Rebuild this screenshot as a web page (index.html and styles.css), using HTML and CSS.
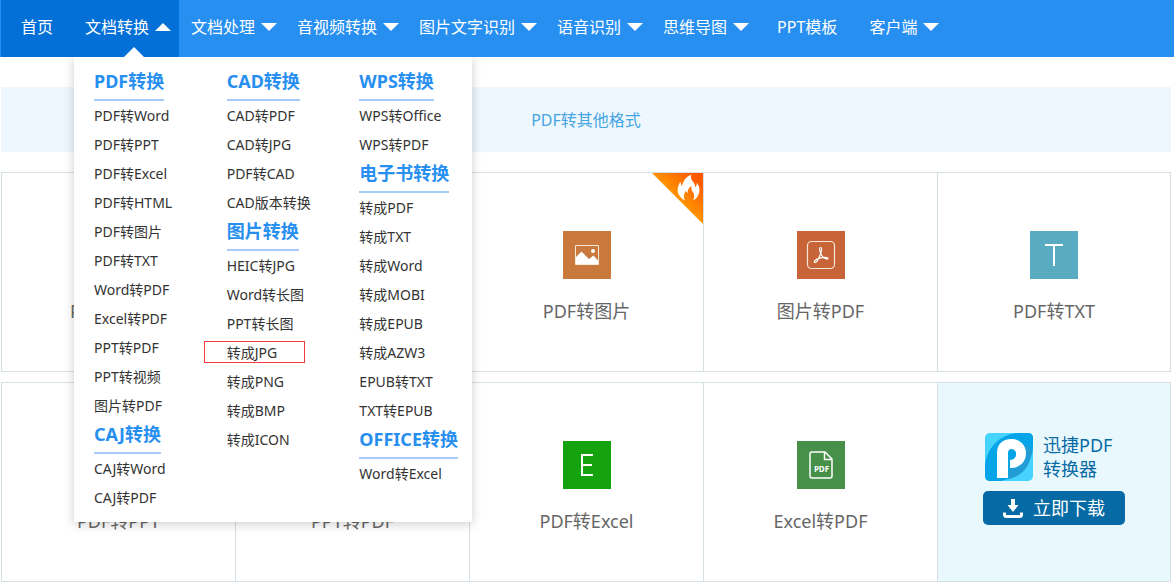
FILE: index.html
```html
<!DOCTYPE html>
<html lang="zh-CN">
<head>
<meta charset="utf-8">
<meta name="viewport" content="width=device-width, initial-scale=1">
<title>PDF转换器</title>
<link rel="stylesheet" href="styles.css">
</head>
<body>
<header class="topbar">
  <nav>
    <ul class="nav">
      <li class="nav-item plain active"><a href="#">首页</a></li>
      <li class="nav-item active open">
        <a href="#">文档转换<span class="caret up"></span></a>
        <div class="mega">
          <section class="mega-col">
            <h3><a href="#">PDF转换</a></h3>
            <ul>
              <li><a href="#">PDF转Word</a></li>
              <li><a href="#">PDF转PPT</a></li>
              <li><a href="#">PDF转Excel</a></li>
              <li><a href="#">PDF转HTML</a></li>
              <li><a href="#">PDF转图片</a></li>
              <li><a href="#">PDF转TXT</a></li>
              <li><a href="#">Word转PDF</a></li>
              <li><a href="#">Excel转PDF</a></li>
              <li><a href="#">PPT转PDF</a></li>
              <li><a href="#">PPT转视频</a></li>
              <li><a href="#">图片转PDF</a></li>
            </ul>
            <h3><a href="#">CAJ转换</a></h3>
            <ul>
              <li><a href="#">CAJ转Word</a></li>
              <li><a href="#">CAJ转PDF</a></li>
            </ul>
          </section>
          <section class="mega-col">
            <h3><a href="#">CAD转换</a></h3>
            <ul>
              <li><a href="#">CAD转PDF</a></li>
              <li><a href="#">CAD转JPG</a></li>
              <li><a href="#">PDF转CAD</a></li>
              <li><a href="#">CAD版本转换</a></li>
            </ul>
            <h3><a href="#">图片转换</a></h3>
            <ul>
              <li><a href="#">HEIC转JPG</a></li>
              <li><a href="#">Word转长图</a></li>
              <li><a href="#">PPT转长图</a></li>
              <li class="marked"><a href="#">转成JPG</a></li>
              <li><a href="#">转成PNG</a></li>
              <li><a href="#">转成BMP</a></li>
              <li><a href="#">转成ICON</a></li>
            </ul>
          </section>
          <section class="mega-col">
            <h3><a href="#">WPS转换</a></h3>
            <ul>
              <li><a href="#">WPS转Office</a></li>
              <li><a href="#">WPS转PDF</a></li>
            </ul>
            <h3><a href="#">电子书转换</a></h3>
            <ul>
              <li><a href="#">转成PDF</a></li>
              <li><a href="#">转成TXT</a></li>
              <li><a href="#">转成Word</a></li>
              <li><a href="#">转成MOBI</a></li>
              <li><a href="#">转成EPUB</a></li>
              <li><a href="#">转成AZW3</a></li>
              <li><a href="#">EPUB转TXT</a></li>
              <li><a href="#">TXT转EPUB</a></li>
            </ul>
            <h3><a href="#">OFFICE转换</a></h3>
            <ul>
              <li><a href="#">Word转Excel</a></li>
            </ul>
          </section>
        </div>
      </li>
      <li class="nav-item"><a href="#">文档处理<span class="caret"></span></a></li>
      <li class="nav-item"><a href="#">音视频转换<span class="caret"></span></a></li>
      <li class="nav-item"><a href="#">图片文字识别<span class="caret"></span></a></li>
      <li class="nav-item"><a href="#">语音识别<span class="caret"></span></a></li>
      <li class="nav-item"><a href="#">思维导图<span class="caret"></span></a></li>
      <li class="nav-item plain"><a href="#">PPT模板</a></li>
      <li class="nav-item"><a href="#">客户端<span class="caret"></span></a></li>
    </ul>
  </nav>
</header>

<main class="content">
  <div class="banner"><a href="#">PDF转其他格式</a></div>

  <div class="cards">
    <a class="card" href="#">
      <span class="icon blue"></span>
      <span class="card-title">PDF转Word</span>
    </a>
    <a class="card" href="#">
      <span class="icon blue"></span>
    </a>
    <a class="card" href="#">
      <svg class="hot" viewBox="0 0 50 50" aria-hidden="true">
        <defs>
          <linearGradient id="hotFill" gradientUnits="userSpaceOnUse" x1="22" y1="28" x2="44" y2="6">
            <stop offset="0" stop-color="#ff9c00"/>
            <stop offset="1" stop-color="#ff5a00"/>
          </linearGradient>
        </defs>
        <path d="M0 0H50V50Z" fill="url(#hotFill)"/>
        <path d="M32 27C27 24 24 19 25.500 14C26 11.500 27 10.500 27.500 8.500C28.500 10 28.800 11.500 29 13C31 10 30.500 5 38.500 1.500C37.500 5 39 7 41 9.500C42 11 42.500 12.500 42.500 14C43.500 13 44 11.500 43.800 9.500C46 12 47 14.500 46.500 18C46 22 44 25 40.500 27C42 23 41.500 20 39.500 18C38.500 16.500 38.500 15 38.800 13C35.500 14.500 35 17 35 19.500C34 19 33.500 18.500 33.300 17.500C31 20.500 31 24 32 27Z" fill="#fff"/>
      </svg>
      <svg class="icon brown" viewBox="0 0 48 48" aria-hidden="true">
        <path d="M12.500 14.500H35.500V33.500H12.500Z" fill="none" stroke="#f7e8dc"/>
        <path d="M13 26L18.500 20.500L26 28L30.500 24.500L35 29.500V33H13Z" fill="#fff"/>
        <circle cx="30" cy="20" r="2" fill="#fff"/>
      </svg>
      <span class="card-title">PDF转图片</span>
    </a>
    <a class="card" href="#">
      <svg class="icon rust" viewBox="0 0 48 48" aria-hidden="true">
        <rect x="10.500" y="10.500" width="27" height="27" rx="4" fill="none" stroke="#f9e5db" stroke-width="1.200"/>
        <path d="M23.500 22C22 18 22.500 16.500 23.600 16.500C25 16.500 25 19 23.500 23C22 27 20 31.500 18.300 31.500C16 31.500 18 28.500 22 27.400C26 26.200 31 26 31 27.600C31 29 26.500 27.500 24.800 24.500Z" fill="none" stroke="#fff" stroke-width="1.200" stroke-linejoin="round"/>
      </svg>
      <span class="card-title">图片转PDF</span>
    </a>
    <a class="card" href="#">
      <svg class="icon teal" viewBox="0 0 48 48" aria-hidden="true">
        <path d="M15 14H33M24 14V35" fill="none" stroke="#fff" stroke-width="2"/>
      </svg>
      <span class="card-title">PDF转TXT</span>
    </a>
    <a class="card" href="#">
      <span class="icon blue"></span>
      <span class="card-title">PDF转PPT</span>
    </a>
    <a class="card" href="#">
      <span class="icon blue"></span>
      <span class="card-title">PPT转PDF</span>
    </a>
    <a class="card" href="#">
      <svg class="icon green" viewBox="0 0 48 48" aria-hidden="true">
        <path d="M30 14H19V34H30M19 24H29" fill="none" stroke="#fff" stroke-width="2"/>
      </svg>
      <span class="card-title">PDF转Excel</span>
    </a>
    <a class="card" href="#">
      <svg class="icon moss" viewBox="0 0 48 48" aria-hidden="true">
        <path d="M15 11H28L35 18V35C35 36.500 34.500 37 33 37H15C13.500 37 13 36.500 13 35V13C13 11.500 13.500 11 15 11ZM27.500 11V18.500H35" fill="none" stroke="#fff" stroke-width="1.500" stroke-linejoin="round"/>
        <text class="icon-label" x="24.500" y="30.500" text-anchor="middle">PDF</text>
      </svg>
      <span class="card-title">Excel转PDF</span>
    </a>
    <div class="card promo">
      <div class="promo-head">
        <svg class="promo-logo" viewBox="0 0 48 48" aria-hidden="true">
          <rect width="48" height="48" rx="5" fill="#46d3ff"/>
          <path d="M0 32C2 15 14 2 32 0H43Q48 0 48 5V15C46 32 34 45 16 48H5Q0 48 0 43Z" fill="#06a5e8"/>
          <path d="M41 17C42 28 37 35 24 36V46C37 43 45 34 47 18L41 11Z" fill="#239bd5"/>
          <path d="M12 45V20C12 11 18 6 26 6C35 6 41 12 41 20C41 29 35 35 25 35V27C29 27 31 24 31 21C31 18 29 16 26.500 16C24 16 23 18 23 20V45Z" fill="#fff"/>
          <circle cx="27" cy="21" r="4" fill="#06a5e8"/>
        </svg>
        <p class="promo-name">迅捷PDF<br>转换器</p>
      </div>
      <button class="download" type="button">
        <svg class="download-icon" viewBox="0 0 20 20" aria-hidden="true">
          <path d="M8 1H12V7H15.500L10 14L4.500 7H8Z" fill="#fff"/>
          <path d="M1.500 14.500V16.500Q1.500 18.500 3.500 18.500H16.500Q18.500 18.500 18.500 16.500V14.500" fill="none" stroke="#fff" stroke-width="3"/>
        </svg>
        立即下载
      </button>
    </div>
  </div>
</main>
</body>
</html>
```
FILE: styles.css
```css
*,
*::before,
*::after {
  box-sizing: border-box;
}

body {
  margin: 0;
  background: #fff;
  color: #333;
  font-family: "Noto Sans", "Noto Sans CJK SC", sans-serif;
  font-size: 14px;
}

a {
  color: inherit;
  text-decoration: none;
}

ul,
h3,
p {
  margin: 0;
  padding: 0;
  list-style: none;
}

/* Top navigation */
.topbar {
  background: #278ff0;
  padding-left: 1px;
}

.nav {
  display: flex;
}

.nav-item {
  position: relative;
  color: #fff;
  font-size: 16px;
  line-height: 24px;
  white-space: nowrap;
}

.nav-item > a {
  display: flex;
  align-items: center;
  gap: 6px;
  padding: 15px 8px 18px 12px;
}

.nav-item.plain > a {
  padding-left: 20px;
  padding-right: 20px;
}

.nav-item.active {
  background: #0270d7;
}

.caret {
  border: 8px solid transparent;
  border-top-color: #fff;
  border-bottom: 0;
}

.caret.up {
  border-top: 0;
  border-bottom: 8px solid #fff;
}

.nav-item.open::after {
  content: "";
  position: absolute;
  left: 51px;
  bottom: 0;
  border: 10px solid transparent;
  border-top: 0;
  border-bottom-color: #fff;
}

/* Drop-down panel */
.mega {
  position: absolute;
  z-index: 10;
  top: 100%;
  left: 1px;
  width: 398px;
  padding: 10px 0;
  display: grid;
  grid-template-columns: repeat(3, 1fr);
  background: #fff;
  box-shadow: 0 2px 10px rgba(0, 0, 0, 0.2);
  clip-path: inset(0 -16px -16px -16px);
  color: #333;
  font-size: 14px;
  line-height: 29px;
}

.mega-col {
  padding-left: 20px;
}

.mega h3 {
  display: flex;
  color: #278ff0;
  font-size: 18px;
  font-weight: 700;
  line-height: 28px;
}

.mega h3 a {
  padding-bottom: 4px;
  border-bottom: 2px solid #a6cbfa;
}

.marked {
  position: relative;
}

.marked::after {
  content: "";
  position: absolute;
  left: -23px;
  top: 3px;
  width: 101px;
  height: 22px;
  border: 1px solid #f23c3c;
}

/* Page content */
.content {
  margin: 30px 3px 3px 1px;
}

.banner {
  padding: 21px 20px 19px;
  margin-bottom: 20px;
  background: #eff7fe;
  color: #45a5e2;
  font-size: 16px;
  line-height: 25px;
  text-align: center;
}

.cards {
  display: grid;
  grid-template-columns: repeat(5, 1fr);
  grid-auto-rows: minmax(200px, auto);
  row-gap: 10px;
}

.card {
  position: relative;
  display: flex;
  flex-direction: column;
  align-items: center;
  gap: 20px;
  padding-top: 58px;
  border: 1px solid #d5e0e4;
  border-right: 0;
  color: #666;
  font-size: 18px;
  line-height: 24px;
}

.card:nth-child(5n) {
  border-right: 1px solid #d5e0e4;
}

.icon {
  width: 48px;
  height: 48px;
}

.icon.blue { background: #4a90d9; }
.icon.brown { background: #c8793b; }
.icon.rust { background: #c76438; }
.icon.teal { background: #58abc1; }
.icon.green { background: #14a20e; }
.icon.moss { background: #46904a; }

.icon-label {
  fill: #fff;
  font-size: 8px;
  font-weight: 700;
}

.hot {
  position: absolute;
  top: 0;
  right: 0;
  width: 51px;
  height: 51px;
}

.promo {
  gap: 10px;
  padding-top: 50px;
  background: #e9f8fd;
  color: #066aa5;
}

.promo-head {
  display: flex;
  gap: 10px;
  width: 138px;
}

.promo-logo {
  flex: none;
  width: 48px;
  height: 48px;
}

.promo-name {
  line-height: 24px;
  white-space: nowrap;
}

.download {
  display: flex;
  align-items: center;
  justify-content: center;
  gap: 10px;
  padding: 5px 20px;
  border: 0;
  border-radius: 5px;
  background: #066aa5;
  color: #fff;
  font: inherit;
}

.download-icon {
  width: 20px;
  height: 20px;
}
```
